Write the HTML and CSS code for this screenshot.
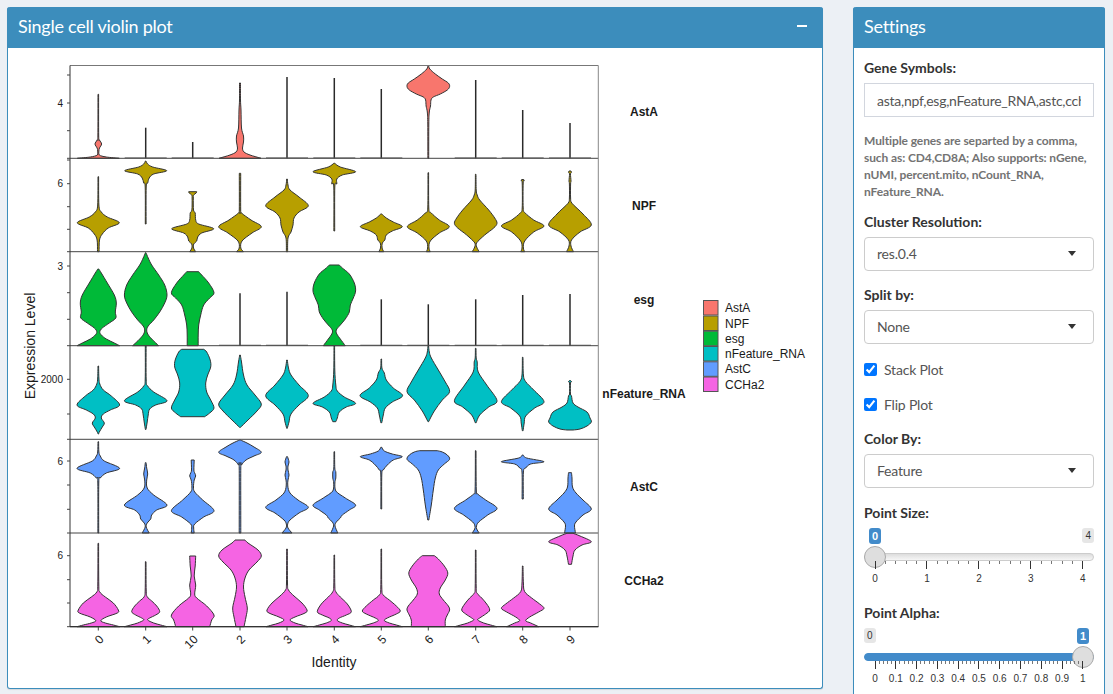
FILE: index.html
```html
<!DOCTYPE html>
<html lang="en">
<head>
    <meta charset="UTF-8">
    <meta name="viewport" content="width=device-width, initial-scale=1.0">
    <title>Single cell violin plot</title>

    <link rel="stylesheet" href="styles.css">
</head>
<body>
    <main class="page">
        <section class="box">
            <header class="box-header">
                <h3 class="box-title">Single cell violin plot</h3>
                <span class="collapse-btn"></span>
            </header>
            <div class="plot-body">
                <!-- viewBox starts at the box offset so the numbers read as page pixels -->
                <svg class="plot" width="814" height="639" viewBox="8 48 814 639">
                    <g id="violins"></g>
                    <g id="axes"></g>

                    <text class="tick-y" x="63" y="107">4</text>
                    <text class="tick-y" x="63" y="187">6</text>
                    <text class="tick-y" x="63" y="270">3</text>
                    <text class="tick-y" x="63" y="383">2000</text>
                    <text class="tick-y" x="63" y="465">6</text>
                    <text class="tick-y" x="63" y="559">6</text>

                    <text class="tick-x" transform="translate(104.500 640) rotate(-45)">0</text>
                    <text class="tick-x" transform="translate(151.700 640) rotate(-45)">1</text>
                    <text class="tick-x" transform="translate(198.700 640) rotate(-45)">10</text>
                    <text class="tick-x" transform="translate(246 640) rotate(-45)">2</text>
                    <text class="tick-x" transform="translate(293 640) rotate(-45)">3</text>
                    <text class="tick-x" transform="translate(340.300 640) rotate(-45)">4</text>
                    <text class="tick-x" transform="translate(387.300 640) rotate(-45)">5</text>
                    <text class="tick-x" transform="translate(434.300 640) rotate(-45)">6</text>
                    <text class="tick-x" transform="translate(481.700 640) rotate(-45)">7</text>
                    <text class="tick-x" transform="translate(528.700 640) rotate(-45)">8</text>
                    <text class="tick-x" transform="translate(576 640) rotate(-45)">9</text>

                    <text class="axis-title" x="334" y="667">Identity</text>
                    <text class="axis-title" transform="translate(35 346) rotate(-90)">Expression Level</text>

                    <text class="strip" x="644" y="116">AstA</text>
                    <text class="strip" x="644" y="210">NPF</text>
                    <text class="strip" x="644" y="304">esg</text>
                    <text class="strip" x="644" y="398">nFeature_RNA</text>
                    <text class="strip" x="644" y="491">AstC</text>
                    <text class="strip" x="644" y="585">CCHa2</text>

                    <rect class="key" x="703.500" y="300.500" width="14.500" height="14.500" fill="#F8766D"></rect>
                    <rect class="key" x="703.500" y="316" width="14.500" height="14.500" fill="#B79F00"></rect>
                    <rect class="key" x="703.500" y="331.200" width="14.500" height="14.500" fill="#00BA38"></rect>
                    <rect class="key" x="703.500" y="346.500" width="14.500" height="14.500" fill="#00BFC4"></rect>
                    <rect class="key" x="703.500" y="361.800" width="14.500" height="14.500" fill="#619CFF"></rect>
                    <rect class="key" x="703.500" y="377" width="14.500" height="14.500" fill="#F564E3"></rect>
                    <text class="key-label" x="725" y="312">AstA</text>
                    <text class="key-label" x="725" y="327.500">NPF</text>
                    <text class="key-label" x="725" y="342.700">esg</text>
                    <text class="key-label" x="725" y="358">nFeature_RNA</text>
                    <text class="key-label" x="725" y="373.200">AstC</text>
                    <text class="key-label" x="725" y="388.500">CCHa2</text>
                </svg>
            </div>
        </section>

        <aside class="box">
            <header class="box-header">
                <h3 class="box-title">Settings</h3>
            </header>
            <div class="settings-body">
                <label class="field-label" for="genes">Gene Symbols:</label>
                <input class="text-input" id="genes" type="text" value="asta,npf,esg,nFeature_RNA,astc,ccha2">
                <p class="help">Multiple genes are separted by a comma, such as: CD4,CD8A; Also supports: nGene, nUMI, percent.mito, nCount_RNA, nFeature_RNA.</p>

                <span class="field-label">Cluster Resolution:</span>
                <div class="select-box">res.0.4</div>

                <span class="field-label">Split by:</span>
                <div class="select-box">None</div>

                <label class="check-row"><input type="checkbox" checked> Stack Plot</label>
                <label class="check-row"><input type="checkbox" checked> Flip Plot</label>

                <span class="field-label">Color By:</span>
                <div class="select-box">Feature</div>

                <span class="field-label slider-label">Point Size:</span>
                <div class="slider">
                    <div class="slider-badges">
                        <span class="badge badge-on badge-start">0</span>
                        <span class="badge">4</span>
                    </div>
                    <div class="slider-track">
                        <span class="slider-handle"></span>
                    </div>
                    <div class="slider-ticks" data-labels="0,1,2,3,4"></div>
                </div>

                <span class="field-label slider-label">Point Alpha:</span>
                <div class="slider">
                    <div class="slider-badges">
                        <span class="badge">0</span>
                        <span class="badge badge-on badge-end">1</span>
                    </div>
                    <div class="slider-track slider-track-full">
                        <span class="slider-handle slider-handle-end"></span>
                    </div>
                    <div class="slider-ticks" data-labels="0,0.1,0.2,0.3,0.4,0.5,0.6,0.7,0.8,0.9,1"></div>
                </div>
            </div>
        </aside>
    </main>

    <script src="plot.js"></script>
</body>
</html>
```

FILE: styles.css
```css
* {
    box-sizing: border-box;
}

html,
body {
    height: 100%;
    margin: 0;
    overflow: hidden;
}

body {
    background-color: #ecf0f5;
    color: #333;
    font-family: 'Lato', sans-serif;
    font-size: 14px;
}

.page {
    display: grid;
    grid-template-columns: 816px 252px;
    column-gap: 30px;
    align-items: start;
    padding: 7px;
}

.box {
    background-color: #fff;
    border: 1px solid #3c8dbc;
    border-top: 0;
    border-radius: 3px;
    box-shadow: 0 1px 1px rgba(0, 0, 0, .1);
}

.box-header {
    display: flex;
    align-items: center;
    justify-content: space-between;
    height: 41px;
    margin: 0 -1px;
    padding: 0 16px 3px 11px;
    background-color: #3c8dbc;
    border-radius: 3px 3px 0 0;
    color: #fff;
}

.box-title {
    margin: 0;
    font-size: 18px;
    font-weight: normal;
    letter-spacing: -.25px;
}

.collapse-btn {
    width: 10px;
    height: 2px;
    background-color: #fff;
}

.plot-body {
    height: 640px;
}

.plot {
    display: block;
}

/* plot text */
.plot text {
    font-family: 'Liberation Sans', sans-serif;
    fill: #1a1a1a;
}

.tick-y {
    font-size: 10px;
    text-anchor: end;
}

.tick-x {
    font-size: 12px;
    text-anchor: end;
}

.axis-title {
    font-size: 14px;
    text-anchor: middle;
}

.strip {
    font-size: 12px;
    font-weight: bold;
    text-anchor: middle;
}

.key-label {
    font-size: 12px;
}

.key {
    stroke: #555;
    stroke-width: 1;
}

/* settings column */
.settings-body {
    display: flex;
    flex-direction: column;
    align-items: stretch;
    padding: 10px 10px 10px;
}

.field-label {
    margin-bottom: 5px;
    line-height: 20px;
    font-weight: bold;
}

.text-input {
    width: 100%;
    height: 34px;
    padding: 0 12px;
    border: 1px solid #d2d6de;
    border-radius: 0;
    outline: none;
    color: #555;
    font-family: inherit;
    font-size: 14px;
    letter-spacing: -.25px;
}

.help {
    margin: 15px 0 12px;
    color: #737373;
    font-size: 12px;
    font-weight: bold;
    line-height: 17px;
    letter-spacing: -.1px;
}

.select-box {
    position: relative;
    height: 34px;
    margin-bottom: 14px;
    padding: 0 12px;
    border: 1px solid #ccc;
    border-radius: 4px;
    color: #555;
    line-height: 32px;
    letter-spacing: -.2px;
}

.select-box::after {
    content: '';
    position: absolute;
    top: 13px;
    right: 17px;
    border-style: solid;
    border-width: 5.500px 4.500px 0;
    border-color: #333 transparent transparent;
}

.select-box + .check-row {
    margin-top: 1px;
}

.check-row {
    display: flex;
    align-items: center;
    gap: 7px;
    height: 20px;
    margin-bottom: 15px;
    color: #555;
    letter-spacing: -.2px;
}

.check-row input {
    margin: 0;
    width: 13px;
    height: 13px;
}

/* sliders */
.slider-label {
    margin-top: 1px;
}

.slider {
    margin-bottom: 23px;
}

.slider-badges {
    display: flex;
    justify-content: space-between;
    align-items: flex-start;
    height: 16px;
}

.badge {
    height: 15px;
    padding: 0 3px;
    border-radius: 3px;
    background-color: #e6e6e6;
    color: #333;
    font-family: 'Liberation Sans', sans-serif;
    font-size: 10px;
    line-height: 15px;
}

.badge-on {
    height: 16px;
    background-color: #428bca;
    color: #fff;
    font-size: 11px;
    font-weight: bold;
    line-height: 16px;
}

.badge-start {
    margin-left: 5px;
}

.badge-end {
    margin-right: 5px;
}

.slider-track {
    position: relative;
    height: 8px;
    margin-top: 9px;
    border: 1px solid #ccc;
    border-radius: 4px;
    background: linear-gradient(#ddd, #f6f6f6);
}

.slider-track-full {
    border-color: #428bca;
    background: #428bca;
}

.slider-handle {
    position: absolute;
    top: -8px;
    left: -1px;
    width: 22px;
    height: 22px;
    border: 1px solid #aaa;
    border-radius: 50%;
    background-color: #dedede;
}

.slider-handle-end {
    left: auto;
    right: -1px;
}

.slider-ticks {
    display: flex;
    justify-content: space-between;
    align-items: flex-start;
    height: 18px;
    padding: 0 10.500px;
}

.tick {
    position: relative;
    width: 1px;
    height: 3px;
    background-color: #777;
}

.tick-major {
    height: 8px;
    background-color: #333;
}

.tick-major span {
    position: absolute;
    top: 12px;
    left: 50%;
    transform: translateX(-50%);
    color: #333;
    font-family: 'Liberation Sans', sans-serif;
    font-size: 10px;
    font-style: normal;
    line-height: 11px;
}
```

FILE: plot.js
```js
const NS = 'http://www.w3.org/2000/svg';
const CENTERS = [98.3, 145.7, 192.7, 240, 287, 334.3, 381.3, 428.3, 475.7, 522.7, 570];
const LEFT = 70;
const RIGHT = 598.3;
const TOP = 65.5;

// A number is a bare stem from that y down to the panel floor.
// An array is the outline of the violin: [y, half width], top to bottom.
const PANELS = [
    {
        color: '#F8766D',
        bottom: 158.3,
        violins: [
            [[94.3, .3], [136, .4], [140, 1.2], [144, 3.3], [148, 1.2], [151, .6], [155, 1], [157, 8], [158.3, 21]],
            127.7,
            142,
            [[83, .5], [100, .5], [110, 1], [128, 1.5], [136, 3.5], [142, 3.5], [148, 2.5], [152, 4], [155, 10], [158.3, 21]],
            77,
            78,
            89,
            [[65.5, .3], [69, 1.5], [74, 7], [79, 14], [83, 20], [86.5, 21.3], [90, 19], [94, 12], [97, 5], [100, 2.7], [106, 2.2], [112, 1], [124, .5], [158.3, .4]],
            80,
            110,
            123
        ]
    },
    {
        color: '#B79F00',
        bottom: 251.7,
        violins: [
            [[176.7, .3], [205, .6], [212, 3], [217, 9], [222.7, 21], [228, 10], [234, 4], [240, 1.2], [251.7, .8]],
            [[161, .3], [164, 2], [167, 7], [170.7, 21], [174, 8], [178, 3.5], [183, 2], [187, .5], [224, .4]],
            [[191.7, 4], [193, 3.5], [195, 1], [198, .6], [210, .8], [213, 2.5], [220, 3], [224, 6], [228.7, 21], [233, 9], [237, 5], [241, 4], [244, 1], [248, .8], [251.7, 3]],
            [[173.3, .7], [210, .7], [213, 1.5], [220, 11], [226.7, 21.3], [233, 12], [241, 2], [248, .8], [251.7, 3.5]],
            [[179, .3], [185, 1], [190, 3], [197, 12], [205.7, 21.3], [212, 12], [218, 7], [225, 6], [232, 4], [238, 1], [251.7, .6]],
            [[163.3, .5], [167, 6], [171.7, 21.3], [175, 8], [179, 2.5], [184, 2.5], [187, .5], [231, .4]],
            [[214, .5], [218, 5], [222, 12], [226.7, 21], [231, 11], [235, 5], [240, 3.5], [243, 1], [248, .8], [251.7, 2.5]],
            [[172.7, .3], [208, .5], [213, 3], [220, 11], [226.7, 21], [233, 11], [241, 2], [248, .7], [251.7, 2]],
            [[174.3, .3], [190, .5], [195, 1.5], [200, 4], [210, 13], [218, 19], [223.3, 21.3], [228, 18], [235, 9], [243, .8], [247, 1], [251.7, 3.5]],
            [[179.5, 1], [181, 1.5], [183, .5], [208, .5], [213, 2.5], [220, 11], [226, 21.3], [232, 11], [241, 2], [248, .7], [251.7, 2]],
            [[171, 1], [172.3, 1.5], [174, .5], [181, 1], [184, .6], [198, .6], [203.3, 2], [214, 13], [225, 21.3], [232, 10], [240, 1.5], [246, 1], [251.7, 3.5]]
        ]
    },
    {
        color: '#00BA38',
        bottom: 345.7,
        violins: [
            [[269, .5], [273, 3], [283, 9], [295, 16], [303, 18], [312, 17], [318, 17.5], [323, 11], [328, 4], [331.7, 1.5], [335, 3], [339, 8], [343, 16], [345.7, 21.3]],
            [[252.7, .3], [258, 2.5], [265, 6], [275, 13], [285, 19], [295, 21.3], [303, 19], [312, 14], [320, 8], [326, 2.5], [330, 1], [334, 2], [339, 6], [345.7, 13]],
            [[271.7, 6], [275, 9], [283, 16], [292.7, 21.3], [298, 17], [305, 11], [315, 8], [325, 6], [335, 5.5], [345.7, 5.5]],
            293.3,
            291.7,
            [[265, 5], [268, 8], [274, 15], [283, 20], [291, 21.3], [298, 19], [305, 16], [312, 15], [319, 11], [325, 6], [330, 2], [334, 2.5], [339, 6], [345.7, 11]],
            299.3,
            304.3,
            299.3,
            295,
            294
        ]
    },
    {
        color: '#00BFC4',
        bottom: 439.3,
        violins: [
            [[366, .3], [378, .6], [384, 1.5], [390, 5], [396, 13], [405, 21.3], [410, 12], [414, 5], [418, 3], [423, 6], [427, 4], [432, 1], [434, .3]],
            [[345.7, .4], [380, .5], [386, 2], [392, 8], [400.7, 21.3], [405, 10], [409, 4], [415, 2.5], [422, 1.5], [429.5, .3]],
            [[349.3, 11], [352, 14], [360, 17.5], [367, 18], [375, 15], [383, 13], [392, 14], [400, 18], [408, 21.3], [413, 17], [416.7, 12]],
            [[355, .3], [362, 1.5], [375, 3.5], [385, 7], [395, 15], [404, 21.3], [411, 17], [420, 8], [427.3, .5]],
            [[360, .3], [368, 1.5], [375, 4], [385, 12], [395.7, 21.3], [405, 12], [414, 4], [422, 2], [428.3, .3]],
            [[345.7, .3], [370, .5], [385, 1.5], [391, 3], [397, 10], [403.3, 21.3], [407, 12], [412, 5], [418, 3], [421.7, 1.5]],
            [[359, .3], [368, .6], [373, 3], [380, 5], [388, 12], [395.7, 21.3], [402, 11], [408, 4], [415, 2], [422.7, .5]],
            [[346, .3], [352, 1], [358, 3], [370, 10], [382, 17], [391.7, 21.3], [400, 14], [411, 6], [421.7, .3]],
            [[348.3, .3], [358, .5], [362, 1.5], [372, 2.5], [385, 11], [400.7, 21.3], [407, 13], [415, 4], [422.7, .5]],
            [[357.3, .3], [375, .7], [381.7, 3], [390, 11], [401.7, 21.3], [408, 12], [416, 3], [423, 1.5], [430.7, .4]],
            [[380.5, .5], [381.7, 1.5], [383, .5], [394, .5], [396, 1.5], [403, 3], [407, 8], [412, 17], [418, 20], [422, 21.3], [426, 17], [429, 10], [430, 3]]
        ]
    },
    {
        color: '#619CFF',
        bottom: 533,
        violins: [
            [[441.7, .3], [452, .6], [456, 2], [461, 6], [468.3, 21.3], [473, 8], [478, 2], [482, .5], [533, .4]],
            [[462.7, .4], [468, 1], [474, 2], [480, 1], [488, 1.5], [495, 8], [505, 21.3], [510, 11], [515, 6], [519, 5], [523, 1.5], [527, .5], [533, 3.5]],
            [[460, 1.5], [470, 1.2], [473, 2], [476, 3], [480, 1.5], [487, .8], [492, 2], [500, 10], [510.7, 21.3], [517, 11], [524, 2], [528, 1], [533, 1.5]],
            [[440, .3], [443, 7], [447, 14], [452.3, 21.3], [456, 14], [460, 6], [465, 1.5], [468, .8], [533, .8]],
            [[456.7, .5], [462, 2], [466, 1], [470, 1], [475, 2], [480, 1], [486, .8], [493, 3], [500, 11], [507.3, 21.3], [513, 12], [520, 3], [524, .7], [528, 1], [533, 5]],
            [[451.7, .3], [468, .5], [472, 1.5], [478, 1.5], [483, .6], [491, 1.5], [498, 11], [505, 21.3], [510, 15], [515, 8], [518, 6], [522, 2], [526, .7], [533, 3.5]],
            [[447.3, .5], [451, 3], [454, 11], [456.7, 21], [460, 12], [465, 6], [470, 2], [474, .5], [509, .4]],
            [[450.7, 9], [452, 14], [455, 19], [459.3, 21.3], [464, 16], [470, 10], [478, 7], [490, 5], [505, 3], [520, .5]],
            [[450.7, .3], [490, .6], [494, 2], [500, 10], [508.3, 21.3], [515, 12], [522, 3], [526, .8], [529, 1], [533, 3.5]],
            [[455, .5], [458, 4], [461.7, 21.3], [464, 8], [468, 3], [472, .7], [499, .6]],
            [[472.7, 1.5], [478, 2], [487, 2.5], [493, 6], [500, 13], [509, 21.3], [515, 13], [522, 6], [526, 4.5], [533, 5.5]]
        ]
    },
    {
        color: '#F564E3',
        bottom: 626.7,
        violins: [
            [[543.3, .3], [585, .5], [592, 1.5], [597, 7], [603, 15], [610, 20], [613, 19], [617, 8], [620.7, 2.5], [623, 7], [625, 15], [626.7, 21.3]],
            [[561.7, .3], [590, .5], [596.7, 1.5], [601, 6], [606, 11], [611.7, 14], [615, 10], [618, 4], [620, 2], [623, 8], [625, 15], [626.7, 21.3]],
            [[556, 3], [566, 2.5], [576, 1.5], [585, 3], [594, 2], [598, 4], [606, 14], [615, 21.3], [620, 19], [626.7, 17]],
            [[540, 5], [543, 8], [550, 18], [556, 21.3], [562, 17], [570, 9], [578, 5], [587, 3.5], [597, 5], [608, 7.3], [617, 6], [626.7, 4]],
            [[549, .3], [583, .5], [590, 1.5], [596, 7], [603, 15], [610, 20], [613, 18], [617, 8], [620, 3], [623, 8], [625, 15], [626.7, 21]],
            [[555, .3], [585, .5], [591.7, 1.5], [597, 6], [604, 13], [611.7, 17], [615, 12], [618, 5], [620.5, 3], [623, 8], [625, 15], [626.7, 21]],
            [[549, .3], [588, .5], [595, 2], [600, 8], [606, 15], [611, 19], [614, 15], [618, 6], [620.5, 3], [623, 8], [625, 15], [626.7, 21]],
            [[555.7, 6], [559, 10], [566, 16], [573, 19.5], [580, 17], [588, 12], [594, 11], [600, 15], [606, 20], [610, 21.3], [615, 19], [620, 17], [626.7, 17]],
            [[550, .3], [587, .5], [593.3, 1.5], [598, 6], [604, 11], [610, 14], [614, 10], [618, 4], [620, 2], [623, 8], [625, 15], [626.7, 21]],
            [[566, .3], [583, .7], [591.7, 2], [598, 9], [604, 17], [608.3, 21.3], [612, 16], [617, 7], [620.7, 3], [623, 8], [626.7, 16]],
            [[533.3, 3], [536, 10], [541.7, 21.3], [545, 12], [550, 5], [556, 3], [564.3, 1.5]]
        ]
    }
];

const Y_TICKS = [
    75, 103, 130.7, 158.3,
    160, 183.7, 206.7, 229.3, 251.7,
    266, 292.7, 319.3, 345.7,
    379.3, 414, 439.3,
    461, 485, 509.3, 533,
    555.7, 579.7, 603, 626.7
];

function el(parent, name, attrs) {
    const node = document.createElementNS(NS, name);
    for (const key in attrs) {
        node.setAttribute(key, attrs[key]);
    }
    parent.appendChild(node);
    return node;
}

function f(n) {
    return n.toFixed(2);
}

// one edge of a violin as a catmull-rom curve
function edge(points, cx, sign) {
    let d = '';
    for (let i = 0; i < points.length - 1; i++) {
        const p0 = points[Math.max(i - 1, 0)];
        const p1 = points[i];
        const p2 = points[i + 1];
        const p3 = points[Math.min(i + 2, points.length - 1)];
        const c1y = p1[0] + (p2[0] - p0[0]) / 6;
        const c2y = p2[0] - (p3[0] - p1[0]) / 6;
        const c1w = Math.max(.2, p1[1] + (p2[1] - p0[1]) / 6);
        const c2w = Math.max(.2, p2[1] - (p3[1] - p1[1]) / 6);
        d += `C${f(cx + sign * c1w)} ${f(c1y)} ${f(cx + sign * c2w)} ${f(c2y)} ${f(cx + sign * p2[1])} ${f(p2[0])}`;
    }
    return d;
}

function violinPath(points, cx) {
    const first = points[0];
    const last = points[points.length - 1];
    const reversed = points.slice().reverse();
    return `M${f(cx - first[1])} ${f(first[0])}` +
        edge(points, cx, -1) +
        `L${f(cx + last[1])} ${f(last[0])}` +
        edge(reversed, cx, 1) + 'Z';
}

function drawViolins() {
    const group = document.getElementById('violins');
    PANELS.forEach(function(panel) {
        panel.violins.forEach(function(violin, i) {
            const cx = CENTERS[i];
            if (typeof violin === 'number') {
                el(group, 'line', { x1: cx, x2: cx, y1: violin, y2: panel.bottom, stroke: '#2a2a2a', 'stroke-width': 1.5 });
                el(group, 'line', { x1: cx - 21, x2: cx + 21, y1: panel.bottom - .5, y2: panel.bottom - .5, stroke: '#555', 'stroke-width': .8 });
            } else {
                el(group, 'path', { d: violinPath(violin, cx), fill: panel.color, stroke: '#333', 'stroke-width': 1 });
            }
        });
    });
}

function drawAxes() {
    const group = document.getElementById('axes');
    const rule = { stroke: '#444', 'stroke-width': 1 };

    PANELS.forEach(function(panel) {
        el(group, 'line', { x1: LEFT, x2: RIGHT, y1: panel.bottom, y2: panel.bottom, ...rule });
    });
    el(group, 'line', { x1: LEFT, x2: RIGHT, y1: TOP, y2: TOP, stroke: '#777', 'stroke-width': 1 });
    el(group, 'line', { x1: RIGHT, x2: RIGHT, y1: TOP, y2: 627, stroke: '#888', 'stroke-width': 1 });
    el(group, 'line', { x1: LEFT, x2: LEFT, y1: TOP, y2: 627, stroke: '#333', 'stroke-width': 1 });
    el(group, 'line', { x1: LEFT, x2: RIGHT, y1: 626.7, y2: 626.7, stroke: '#333', 'stroke-width': 1.2 });

    Y_TICKS.forEach(function(y) {
        el(group, 'line', { x1: 67, x2: LEFT, y1: y, y2: y, ...rule });
    });
    CENTERS.forEach(function(x) {
        el(group, 'line', { x1: x, x2: x, y1: 627, y2: 630.5, ...rule });
    });
}

function drawSliderTicks() {
    document.querySelectorAll('.slider-ticks').forEach(function(row) {
        const labels = row.dataset.labels.split(',');
        labels.forEach(function(label, i) {
            const major = document.createElement('i');
            major.className = 'tick tick-major';
            const text = document.createElement('span');
            text.textContent = label;
            major.appendChild(text);
            row.appendChild(major);

            if (i < labels.length - 1) {
                for (let m = 0; m < 4; m++) {
                    const minor = document.createElement('i');
                    minor.className = 'tick';
                    row.appendChild(minor);
                }
            }
        });
    });
}

drawViolins();
drawAxes();
drawSliderTicks();
```
